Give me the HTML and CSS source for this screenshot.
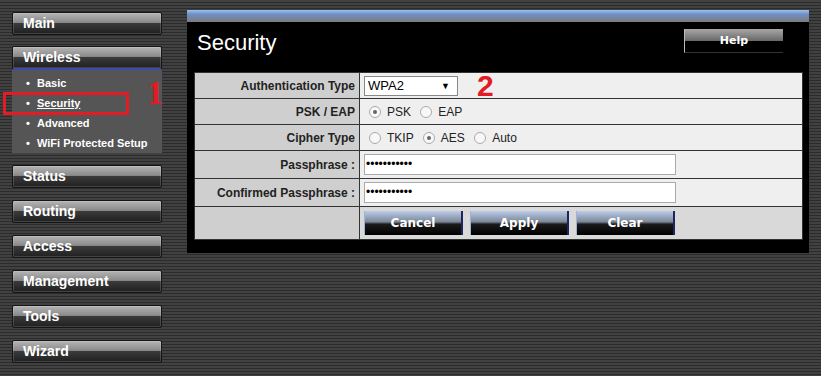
FILE: index.html
```html
<!DOCTYPE html>
<html lang="en">
<head>
  <meta charset="UTF-8" />
  <title>Wireless Security</title>
  <link rel="stylesheet" href="styles.css">
</head>
<body>
  <div class="page">
    <div class="nav">
      <div class="nav-btn first">Main</div>
      <div class="nav-group">
        <div class="nav-btn open">Wireless</div>
        <ul class="sub">
          <li>Basic</li>
          <li class="current">Security <span class="mark">1</span></li>
          <li>Advanced</li>
          <li>WiFi Protected Setup</li>
        </ul>
      </div>
      <div class="nav-btn">Status</div>
      <div class="nav-btn">Routing</div>
      <div class="nav-btn">Access</div>
      <div class="nav-btn">Management</div>
      <div class="nav-btn">Tools</div>
      <div class="nav-btn">Wizard</div>
    </div>

    <div class="panel">
      <div class="panel-bar"></div>
      <div class="panel-head">
        <h1>Security</h1>
        <div class="help">Help</div>
      </div>
      <table class="form">
        <tr>
          <th>Authentication Type</th>
          <td><span class="select">WPA2 <span class="arrow">▼</span></span><span class="mark two">2</span></td>
        </tr>
        <tr>
          <th>PSK / EAP</th>
          <td><span class="radio on"></span>PSK <span class="radio"></span>EAP</td>
        </tr>
        <tr>
          <th>Cipher Type</th>
          <td><span class="radio"></span>TKIP <span class="radio on"></span>AES <span class="radio"></span>Auto</td>
        </tr>
        <tr class="tall">
          <th>Passphrase :</th>
          <td><span class="pass">&bull;&bull;&bull;&bull;&bull;&bull;&bull;&bull;&bull;&bull;&bull;</span></td>
        </tr>
        <tr class="tall">
          <th>Confirmed Passphrase :</th>
          <td><span class="pass">&bull;&bull;&bull;&bull;&bull;&bull;&bull;&bull;&bull;&bull;&bull;</span></td>
        </tr>
        <tr class="actions">
          <th></th>
          <td>
            <span class="act">Cancel</span><span class="act">Apply</span><span class="act">Clear</span>
          </td>
        </tr>
      </table>
    </div>
  </div>
</body>
</html>
```

FILE: styles.css
```css
html, body { margin: 0; height: 100%; }
body { background: repeating-linear-gradient(to bottom, #414141 0, #414141 2px, #2b2b2b 2px, #2b2b2b 3px); font-family: 'Liberation Sans', Arial, sans-serif; }
.page { display: flex; align-items: flex-start; padding: 10px 0 0 12px; }

.nav { width: 150px; display: flex; flex-direction: column; gap: 12px; padding-top: 2px; }
.nav-btn { height: 23px; box-sizing: border-box; border: 1px solid #151515; border-radius: 2px; background: linear-gradient(to bottom, #b4b4b4 0, #8a8a8a 45%, #3a3a3a 50%, #202020 100%); color: #fff; font-weight: bold; font-size: 14px; line-height: 21px; padding-left: 10px; box-shadow: inset 0 0 0 1px rgba(255,255,255,0.15); }
.nav-btn.first { margin-bottom: -1px; }
.nav-btn.open { border-bottom: 2px solid #3a4bb0; height: 24px; }
.sub { list-style: none; margin: 0; padding: 3px 0 0 0; background: #555; }
.sub li { position: relative; color: #fff; font-weight: bold; font-size: 11px; height: 20px; line-height: 20px; padding-left: 25px; }
.sub li::before { content: "•"; position: absolute; left: 14px; }
.sub li.current { text-decoration: underline; }
.sub li.current::after { content: ""; position: absolute; left: -9px; top: -1px; width: 120px; height: 17px; border: 3px solid #e21b25; }
.mark { position: absolute; color: #e21b25; font-family: 'Liberation Serif', serif; font-weight: bold; font-size: 33px; line-height: 1; text-decoration: none; display: inline-block; }
.sub .mark { left: 135px; top: -16px; }

.panel { margin-left: 25px; width: 622px; background: #000; padding-bottom: 13px; }
.panel-bar { height: 12px; background: linear-gradient(to bottom, #9cc0f0 0, #6f8fc4 35%, #7c7c7c 100%); }
.panel-head { height: 50px; display: flex; align-items: flex-start; justify-content: space-between; padding: 0 26px 0 10px; }
.panel-head h1 { margin: 8px 0 0; color: #fff; font-weight: normal; font-size: 22px; }
.help { margin-top: 7px; width: 99px; height: 24px; box-sizing: border-box; border-left: 1px solid #bbb; border-bottom: 1px solid #333; background: linear-gradient(to bottom, #a8a8a8 0, #6a6a6a 50%, #000 52%, #000 100%); color: #fff; font-family: 'DejaVu Sans', Verdana, sans-serif; font-weight: bold; font-size: 11px; text-align: center; line-height: 23px; }

.form { margin-left: 7px; width: 609px; border-collapse: collapse; font-size: 12px; }
.form th, .form td { border: 1px solid #333; height: 25px; padding: 0; }
.form th { width: 160px; background: #cfcfcf; text-align: right; padding-right: 4px; color: #222; font-weight: bold; font-size: 12px; }
.form td { background: #efefef; color: #222; padding-left: 4px; position: relative; }
.form tr.tall th, .form tr.tall td { height: 27px; }
.form tr.actions th { background: #cfcfcf; }
.form tr.actions td { background: #d9d9d9; height: 32px; }

.select { display: inline-block; vertical-align: middle; width: 94px; height: 20px; box-sizing: border-box; border: 1px solid #888; background: #fff; font-size: 13px; line-height: 18px; padding-left: 3px; color: #000; }
.select .arrow { float: right; font-size: 9px; margin-right: 7px; }
.mark.two { left: 117px; top: -2px; font-family: 'Liberation Sans', Arial, sans-serif; font-size: 30px; }
.radio { display: inline-block; vertical-align: -2px; width: 12px; height: 12px; box-sizing: border-box; border: 1px solid #aaa; border-radius: 50%; background: #f8f8f8; margin: 0 6px 0 6px; position: relative; }
.radio.on::after { content: ""; position: absolute; left: 3px; top: 3px; width: 4px; height: 4px; border-radius: 50%; background: #666; }
.form td .radio:first-child { margin-left: 5px; }

.pass { display: inline-block; vertical-align: middle; width: 312px; height: 21px; box-sizing: border-box; border: 1px solid #aaa; background: #fff; font-size: 12px; line-height: 19px; padding-left: 1px; color: #000; }

.act { display: inline-block; vertical-align: middle; width: 99px; height: 24px; margin-right: 7px; box-sizing: border-box; border-right: 2px solid #1c2560; border-left: 1px solid #9db4d8; background: linear-gradient(to bottom, #b9cce8 0, #7d8899 45%, #1a1a1a 55%, #000 100%); color: #fff; font-family: 'DejaVu Sans', Verdana, sans-serif; font-weight: bold; font-size: 12px; text-align: center; line-height: 24px; }
.act:last-child { margin-right: 0; }
```
